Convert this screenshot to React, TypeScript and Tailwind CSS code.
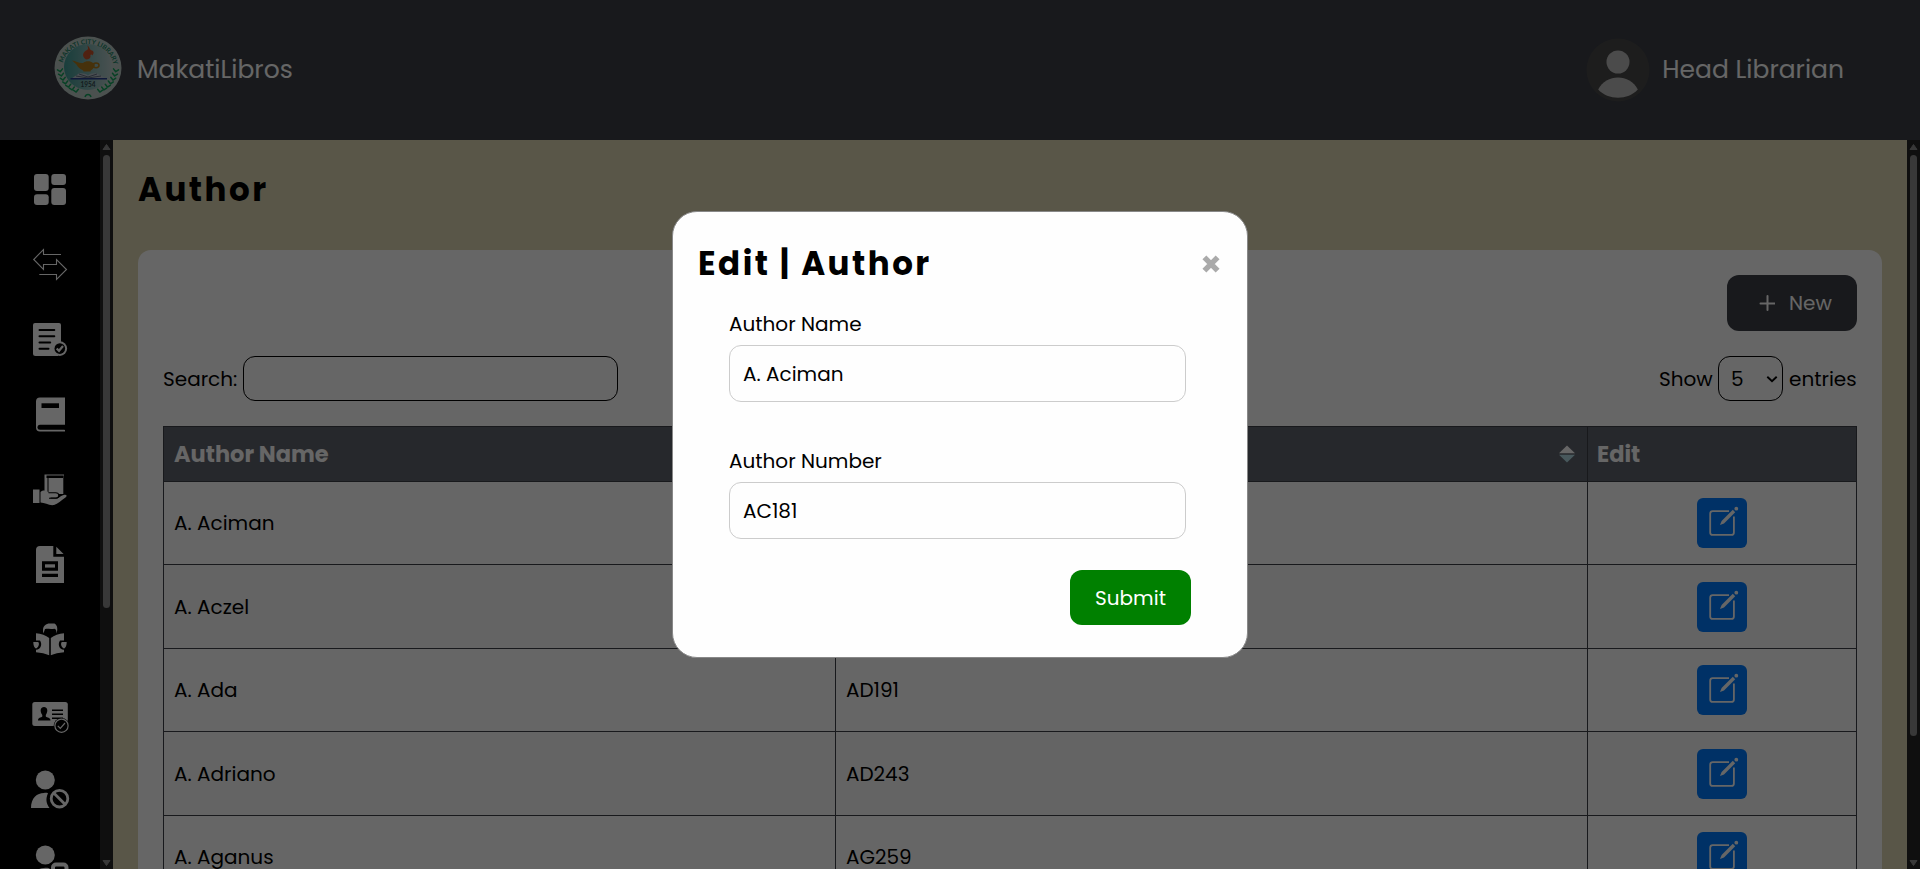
import React from "react";

const navIcons: React.ReactNode[] = [
  <g key="dash">
    <rect x="4" y="5" width="14.7" height="17" rx="3" />
    <rect x="4" y="25.3" width="14.7" height="10.7" rx="3" />
    <rect x="21.3" y="5" width="14.7" height="11" rx="3" />
    <rect x="21.3" y="19" width="14.7" height="17" rx="3" />
  </g>,
  <path
    key="swap"
    d="M31 10.500H13.500V5.500L3.700 15.500L13.500 25.500V20.500H26.500V15.500L36.500 25.500L26.500 35.500V30.500H9.300"
    fill="none"
    stroke="white"
    strokeWidth="1.1"
  />,
  <g key="list">
    <path d="M5 4H29a2 2 0 0 1 2 2V30L28 37H5.500a2.500 2.500 0 0 1-2.500-2.500V6a2 2 0 0 1 2-2Z" />
    <path d="M9.500 11H24.300M9.500 17.300H24.300M9.500 23.500H20.200M9.500 29.700H18.500" stroke="black" strokeWidth="2" strokeLinecap="round" />
    <circle cx="29.800" cy="29.600" r="7.300" />
    <circle cx="29.800" cy="29.600" r="5.300" fill="black" />
    <path d="M26.700 29.500L29 31.800L33 27" fill="none" stroke="white" strokeWidth="2.200" />
  </g>,
  <g key="book">
    <path d="M10 3.500H35V32.600L34 35.500H35V37.500H10a4 4 0 0 1-4-4V7.500a4 4 0 0 1 4-4Z" />
    <rect x="11.500" y="9.300" width="17.500" height="4.700" fill="black" />
    <path d="M36 30.800H10a2.500 2.500 0 0 0 0 5H36Z" fill="black" />
  </g>,
  <g key="hand">
    <path d="M14.500 5.500H34V6.500H33.300V25H18.500V9H33V6.500H16.500V9H17.500V23.500L14.500 22Z" />
    <path d="M3 20.500H9.500V34H3ZM10.500 23C14 20 17.500 22 20 24.800H26.500C29.500 24.800 29 28.500 26 28.500H20.500V29.500H27C29.500 29 31 26.300 34.500 25.800C37 25.600 37.300 27.200 35.500 28.500C31 31.500 28 35 24 36C19 36.800 15 33.500 10.500 33.500Z" />
    <path d="M18.500 23.700H25.500C30 23.700 29.700 29.300 26 29.300H19" fill="none" stroke="black" strokeWidth="1.100" />
  </g>,
  <g key="doc">
    <path d="M10 2H23.300V12.800H34V39H6V6a4 4 0 0 1 4-4ZM26.300 2.700L33.600 10H26.300Z" />
    <path d="M12 17.200H28V26.700H12ZM12 29.700H28V33H12Z" fill="black" />
    <rect x="15" y="20.300" width="10" height="3.300" />
  </g>,
  <g key="reader">
    <path d="M13.500 13.500C11.500 6 16 3.500 20 3.500H24.500C27.500 5 28 9.500 26.500 13.500C26.500 10.500 26 9 24.500 8.700C20 9.700 15.500 8 14.800 9.500Z" />
    <path d="M6 13.200C11 13.500 16 15.500 19.200 18V35.300C15.500 33.500 11 32.700 6 32.200V29.800C11 29.500 12.500 24 10 20.500H6ZM34 13.200C29 13.500 24 15.500 20.800 18V35.300C24.500 33.500 29 32.700 34 32.200V29.800C29 29.500 27.500 24 30 20.500H34Z" />
    <path d="M3.300 22H8.200C10 24 8.200 28 5.800 28.500C4.200 27.500 3.300 25.500 3.300 22ZM36.700 22H31.800C30 24 31.800 28 34.200 28.500C35.800 27.500 36.700 25.500 36.700 22Z" />
  </g>,
  <g key="card">
    <rect x="2.300" y="7" width="35.500" height="24" rx="2.500" />
    <path d="M20.500 25.500H8C8 22.500 11 22.700 12.300 21.500V20C9.500 16 10.500 12 14 12S18.500 16 15.800 20V21.500C17 22.700 20.500 22.500 20.500 25.500Z" fill="black" />
    <path d="M22 15.200H33M22 19.200H33M22 23.200H33" stroke="black" strokeWidth="1.500" />
    <circle cx="31.500" cy="30.700" r="7.800" fill="black" />
    <circle cx="31.500" cy="30.700" r="6.600" fill="black" stroke="white" strokeWidth="1.200" />
    <path d="M27.800 30.800L30.300 33.300L35 28" fill="none" stroke="white" strokeWidth="1.200" />
  </g>,
  <g key="ban">
    <circle cx="15.300" cy="10" r="9.500" />
    <path d="M1 38C1 28 7 23 14 23C15.500 22.700 17 22.800 18 23.200C15.500 28.500 16 33.500 19.500 38Z" />
    <circle cx="29.500" cy="28.700" r="8.300" fill="none" stroke="white" strokeWidth="2.800" />
    <path d="M23.500 22.700L35.500 34.700" stroke="white" strokeWidth="2.800" />
  </g>,
  <g key="lock">
    <circle cx="15.300" cy="10" r="9.500" />
    <path d="M1 39C1 29 7 23 14 23C17 22.500 19 23 20 24V40H1Z" />
    <path d="M20.500 40V21.500a5 5 0 0 1 5-5H34a5 5 0 0 1 5 5V40Z" fill="black" />
    <path d="M23 40V22.500a3 3 0 0 1 3-3H33.500a3 3 0 0 1 3 3V40" fill="none" stroke="white" strokeWidth="4" />
  </g>,
];

const authors = [
  { name: "A. Aciman", number: "", h: "h-[83px]", bg: "bg-white" },
  { name: "A. Aczel", number: "", h: "h-[84px]", bg: "bg-[#f9f9f9]" },
  { name: "A. Ada", number: "AD191", h: "h-[83px]", bg: "bg-white" },
  { name: "A. Adriano", number: "AD243", h: "h-[84px]", bg: "bg-[#f9f9f9]" },
  { name: "A. Aganus", number: "AG259", h: "h-[83px]", bg: "bg-white" },
];

function Scrollbar({ thumb }: { thumb: string }) {
  return (
    <div className="flex w-[13px] shrink-0 flex-col items-center bg-[#262626]">
      <svg className="h-[15px] w-[13px] shrink-0" viewBox="0 0 13 15">
        <path d="M6.500 4.500L10 9.500H3Z" fill="#8c8c8c" stroke="#8c8c8c" strokeWidth="1" strokeLinejoin="round" />
      </svg>
      <div className={`w-[7px] shrink-0 rounded-full bg-[#8c8c8c] ${thumb}`} />
      <svg className="mt-auto h-[12px] w-[13px] shrink-0" viewBox="0 0 13 12">
        <path d="M6.500 8.500L10 3.500H3Z" fill="#8c8c8c" stroke="#8c8c8c" strokeWidth="1" strokeLinejoin="round" />
      </svg>
    </div>
  );
}

function Leaves() {
  const steps = [0, 1, 2, 3, 4, 5, 6];
  return (
    <g stroke="#12a35c" strokeWidth="1.500" strokeLinecap="round">
      {steps.map((i) => {
        const a = ((172 - i * 9.500) * Math.PI) / 180;
        const x = 34 + 28 * Math.cos(a);
        const y = 32 + 26.500 * Math.sin(a);
        return (
          <g key={i}>
            <path d={`M${x} ${y}l-2.800 -1.800M${x} ${y}l2.200 -2.800`} />
            <path d={`M${68 - x} ${y}l2.800 -1.800M${68 - x} ${y}l-2.200 -2.800`} />
          </g>
        );
      })}
    </g>
  );
}

function Seal() {
  return (
    <svg className="mb-[4px] h-[64px] w-[68px]" viewBox="0 0 68 64">
      <defs>
        <linearGradient id="sky" x1="0" x2="1">
          <stop offset="0" stopColor="#3f9c96" />
          <stop offset="0.500" stopColor="#7fb3b1" />
          <stop offset="1" stopColor="#b9cccb" />
        </linearGradient>
        <path id="ring" d="M8 34A26 26 0 0 1 60 34" />
      </defs>
      <ellipse cx="34" cy="32" rx="33.500" ry="31.500" fill="#bccbc6" />
      <ellipse cx="34" cy="31" rx="24" ry="23" fill="url(#sky)" />
      <text fontSize="6.600" fontWeight="700" fill="#1f8468" textLength="69" lengthAdjust="spacing" fontFamily="Lato, sans-serif">
        <textPath href="#ring" startOffset="7">MAKATI CITY LIBRARY</textPath>
      </text>
      <Leaves />
      <path d="M31 61C32 57.500 36 57.500 37 61" fill="none" stroke="#12a35c" strokeWidth="1.500" />
      <path d="M32 23.500C27 20 29 16 33 14C35 12.500 33.500 11 33.500 9.500C36 11.500 35.500 14 38 14.500C41 16 39 18.500 38.500 19.500C37.500 17.500 36 18.500 36.500 20.500C36.500 22.500 34.500 23.500 32 23.500Z" fill="#c9542c" />
      <path d="M18 24.500C22 25 25 27.500 29 27C31.500 24.500 36.500 24.500 39 27H40.500C41 30 40.500 31.500 39 32.500C38 34 36.500 34 36.500 35.500H29.500C29.500 33.500 25 33.500 22.500 28.500Z" fill="#b07a1c" />
      <ellipse cx="42" cy="29.300" rx="3" ry="2.400" fill="none" stroke="#b07a1c" strokeWidth="1.500" />
      <path d="M17.500 42.500L25 37.500C29 37 32 38 34 39.500C36 38 39 37 43 37.500L52.500 42.500Z" fill="#b8c4cc" />
      <path d="M25 38L34 41L43 38M22 40L34 42L47 40" fill="none" stroke="#4d5a6e" strokeWidth="0.800" />
      <path d="M16.500 42.800H53" stroke="#28408f" strokeWidth="1.400" />
      <text x="34" y="51" fontSize="6.500" fontWeight="700" fill="#33484d" textAnchor="middle" fontFamily="Lato, sans-serif">
        1954
      </text>
    </svg>
  );
}

function EditButton() {
  return (
    <button className="grid size-[50px] place-items-center rounded-[6px] bg-[#007bff]">
      <svg className="size-[50px]" viewBox="0 0 50 50" fill="none" stroke="white">
        <path d="M32 13.200H15.700a2.500 2.500 0 0 0-2.500 2.500V34.400a2.500 2.500 0 0 0 2.500 2.500H34.400a2.500 2.500 0 0 0 2.500-2.500V18.500" strokeWidth="1.800" />
        <path d="M23 27L24.600 23L35.800 11.800L38.200 14.200L27 25.400Z" fill="white" stroke="none" />
        <circle cx="39.300" cy="10.700" r="1.900" fill="white" stroke="none" />
      </svg>
    </button>
  );
}

function Field({ label, value }: { label: string; value: string }) {
  return (
    <div className="flex flex-col gap-[9px]">
      <label className="h-6 leading-6">{label}</label>
      <div className="flex h-[57px] w-[457px] items-center rounded-[12px] border border-[#ccc] pl-[13px]">
        {value}
      </div>
    </div>
  );
}

export default function App() {
  return (
    <div className="relative flex h-[869px] w-[1920px] flex-col overflow-hidden bg-black font-['Poppins','Inter',sans-serif] text-[20px] text-black">
      <header className="flex h-[140px] shrink-0 items-center justify-between bg-[#3c3f46] pr-[76px] pl-[54px] text-[25px] text-white">
        <div className="flex items-center gap-[15px]">
          <Seal />
          <span>MakatiLibros</span>
        </div>
        <div className="flex items-center gap-[12px]">
          <svg className="size-[64px]" viewBox="0 0 64 64">
            <circle cx="32" cy="32" r="31.500" fill="#4a4a4a" />
            <circle cx="32" cy="24" r="11.500" fill="#bcbcbc" />
            <path d="M12.200 51.500C20 35.500 44 35.500 51.800 51.500C42 62.500 22 62.500 12.200 51.500Z" fill="#bcbcbc" />
          </svg>
          <span>Head Librarian</span>
        </div>
      </header>

      <div className="flex min-h-0 flex-1">
        <nav className="flex w-[100px] shrink-0 flex-col items-center gap-[35px] overflow-hidden bg-black pt-[29px]">
          {navIcons.map((icon, i) => (
            <svg key={i} className={`size-10 shrink-0 fill-white ${i === 6 ? "mt-px" : ""}`} viewBox="0 0 40 40">
              {icon}
            </svg>
          ))}
        </nav>
        <Scrollbar thumb="h-[453px]" />

        <main className="min-w-0 flex-1 overflow-hidden bg-[#ded7b4] px-[25px] pt-[25px]">
          <h1 className="flex h-[48px] items-center pt-[2px] text-[32.5px] font-bold tracking-[2.5px]">Author</h1>
          <section className="mt-[37px] h-[800px] rounded-[13px] bg-white p-[25px]">
            <div className="flex justify-end">
              <button className="flex h-14 w-[130px] items-center rounded-[12px] bg-[#3c3f46] pl-[32px] text-white">
                <svg className="mr-[14px] size-4" viewBox="0 0 16 16">
                  <path d="M8.500 1V15M1.500 8.500H15.500" stroke="white" strokeWidth="2" strokeLinecap="round" />
                </svg>
                <span>New</span>
              </button>
            </div>
            <div className="mt-[25px] flex justify-between">
              <label className="flex items-center">
                <span className="w-[80px]">Search:</span>
                <span className="h-[45px] w-[375px] rounded-[12px] border border-black" />
              </label>
              <div className="flex items-center">
                <span className="w-[59px]">Show</span>
                <span className="flex h-[45px] w-[65px] items-center justify-between rounded-[12px] border border-black pr-[4px] pl-[12px]">
                  5
                  <svg className="size-3" viewBox="0 0 12 12">
                    <path d="M1.300 3.800L6 8.300L10.700 3.800" fill="none" stroke="black" strokeWidth="1.900" />
                  </svg>
                </span>
                <span className="w-[74px] pl-[6px]">entries</span>
              </div>
            </div>

            <div className="mt-[25px] border border-[#3c3f46]">
              <div className="grid h-[54px] grid-cols-[672px_752px_1fr] bg-[#5f646e] text-[22.5px] font-bold text-white">
                <div className="flex items-center border-r border-[#3c3f46] pt-[2px] pl-[10px]">Author Name</div>
                <div className="flex items-center justify-end border-r border-[#3c3f46] pr-[12px]">
                  <svg className="h-[18px] w-4" viewBox="0 0 16 18">
                    <path d="M8 0.500L16 8.300H0Z" fill="white" />
                    <path d="M8 17.500L16 9.700H0Z" fill="#b4dce6" />
                  </svg>
                </div>
                <div className="flex items-center pt-[2px] pl-[9px]">Edit</div>
              </div>
              {authors.map((a) => (
                <div key={a.name} className={`grid grid-cols-[672px_752px_1fr] border-t border-[#3c3f46] ${a.h} ${a.bg}`}>
                  <div className="flex items-center border-r border-[#3c3f46] pl-[10px]">{a.name}</div>
                  <div className="flex items-center border-r border-[#3c3f46] pl-[10px]">{a.number}</div>
                  <div className="grid place-items-center">
                    <EditButton />
                  </div>
                </div>
              ))}
            </div>
          </section>
        </main>
        <Scrollbar thumb="h-[581px]" />
      </div>

      <div className="absolute inset-0 flex justify-center bg-black/60 pt-[211px]">
        <div className="h-[447px] w-[576px] rounded-[25px] border border-[#888] bg-[#fefefe] px-[25px]">
          <div className="mt-[28px] flex h-[48px] items-center justify-between">
            <h2 className="pt-px text-[32.5px] font-bold tracking-[2.5px]">Edit | Author</h2>
            <svg className="size-[22px]" viewBox="0 0 20 20">
              <path d="M4 4L16 16M16 4L4 16" stroke="#aaa" strokeWidth="5" />
            </svg>
          </div>
          <div className="mt-[24px] flex flex-col gap-[47px] pl-[31px]">
            <Field label="Author Name" value="A. Aciman" />
            <Field label="Author Number" value="AC181" />
          </div>
          <div className="mt-[31px] flex justify-end pr-[31px]">
            <button className="h-[55px] w-[121px] rounded-[12px] bg-[#008000] text-white">Submit</button>
          </div>
        </div>
      </div>
    </div>
  );
}
